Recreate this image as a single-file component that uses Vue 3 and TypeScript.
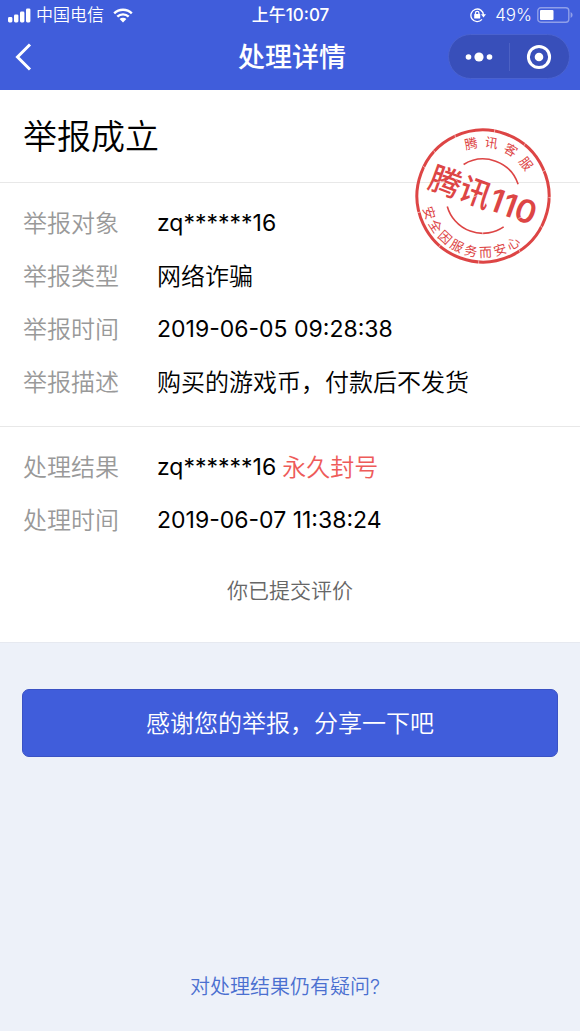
<script setup lang="ts">
interface Row {
  label: string
  value: string
  latin?: boolean
  note?: string
}

interface Glyph {
  char: string
  angle: number
}

const reportRows: Row[] = [
  { label: '举报对象', value: 'zq******16', latin: true },
  { label: '举报类型', value: '网络诈骗' },
  { label: '举报时间', value: '2019-06-05 09:28:38', latin: true },
  { label: '举报描述', value: '购买的游戏币，付款后不发货' },
]

const resultRows: Row[] = [
  { label: '处理结果', value: 'zq******16', latin: true, note: '永久封号' },
  { label: '处理时间', value: '2019-06-07 11:38:24', latin: true },
]

// Spreads characters evenly round a circle, centred on angle 0.
function spread(text: string, step: number): Glyph[] {
  const chars = Array.from(text)
  return chars.map((char, i) => ({ char, angle: (i - (chars.length - 1) / 2) * step }))
}

const topGlyphs = spread('腾讯客服', 22)
const bottomGlyphs = spread('安全因服务而安心', -15)
</script>

<template>
  <div class="page">
    <header class="top">
      <div class="status">
        <div class="status-side">
          <svg class="signal" viewBox="0 0 23 15" aria-hidden="true">
            <rect x="0" y="9" width="4.4" height="5.4" rx="1.4" />
            <rect x="6" y="6.4" width="4.4" height="8" rx="1.4" />
            <rect x="12" y="3.6" width="4.4" height="10.8" rx="1.4" />
            <rect x="18" y=".4" width="4.4" height="14" rx="1.4" />
          </svg>
          <span>中国电信</span>
          <svg class="wifi" viewBox="0 0 20 15" aria-hidden="true">
            <path d="M1.2 5.4a12.4 12.4 0 0 1 17.6 0" />
            <path d="M4.3 8.7a8.1 8.1 0 0 1 11.4 0" />
            <path class="wifi-dot" d="M6.6 11.1a4.8 4.8 0 0 1 6.8 0L10 14.5z" />
          </svg>
        </div>
        <span class="clock">上午10:07</span>
        <div class="status-side status-right">
          <svg class="lock" viewBox="0 0 16 16" aria-hidden="true">
            <path d="M12 12.4A6.3 6.3 0 1 1 13.5 8" />
            <path class="solid" d="M11 7.2h5l-2.5 3.2z" />
            <rect class="solid" x="4.2" y="7" width="6" height="4.6" rx=".6" />
            <path d="M5.5 7.2V6a1.7 1.7 0 0 1 3.4 0v1.2" />
          </svg>
          <span>49%</span>
          <svg class="battery" viewBox="0 0 36 16" aria-hidden="true">
            <rect class="case" x=".8" y=".8" width="31" height="14.4" rx="3" />
            <rect x="3" y="3" width="13.5" height="10" rx="1" />
            <path class="tip" d="M33.6 5v6q2-1 2-3t-2-3z" />
          </svg>
        </div>
      </div>
      <nav class="bar">
        <button class="back" type="button" aria-label="返回">
          <svg viewBox="0 0 18 28" aria-hidden="true"><path d="M16 1.5 3.5 14 16 26.5" /></svg>
        </button>
        <h1>处理详情</h1>
        <div class="capsule">
          <button type="button" aria-label="更多">
            <svg viewBox="0 0 28 10" aria-hidden="true">
              <circle cx="3.5" cy="5" r="2.8" />
              <circle cx="14" cy="5" r="4.6" />
              <circle cx="24.5" cy="5" r="2.8" />
            </svg>
          </button>
          <button type="button" aria-label="关闭">
            <svg class="target" viewBox="0 0 26 26" aria-hidden="true">
              <circle class="ring" cx="13" cy="13" r="10.6" />
              <circle cx="13" cy="13" r="4.3" />
            </svg>
          </button>
        </div>
      </nav>
    </header>

    <main class="panel">
      <h2>举报成立</h2>
      <dl>
        <div v-for="row in reportRows" :key="row.label" class="row">
          <dt>{{ row.label }}</dt>
          <dd><span :class="{ latin: row.latin }">{{ row.value }}</span></dd>
        </div>
      </dl>
      <dl>
        <div v-for="row in resultRows" :key="row.label" class="row">
          <dt>{{ row.label }}</dt>
          <dd>
            <span :class="{ latin: row.latin }">{{ row.value }}</span>
            <span v-if="row.note" class="note">{{ row.note }}</span>
          </dd>
        </div>
      </dl>
      <p class="rated">你已提交评价</p>

      <svg class="stamp" viewBox="-70 -70 140 140" role="img" aria-label="腾讯110">
        <g transform="rotate(20)">
          <circle class="edge" r="66" />
          <path class="arc" d="M-29 -23A37 37 0 0 1 29 -23" />
          <path class="arc" d="M-30 22A37 37 0 0 0 30 22" />
          <text
            v-for="(g, i) in topGlyphs"
            :key="`t${i}`"
            class="small"
            :transform="`rotate(${g.angle})`"
            y="-49"
          >{{ g.char }}</text>
          <text
            v-for="(g, i) in bottomGlyphs"
            :key="`b${i}`"
            class="small"
            :transform="`rotate(${g.angle})`"
            y="61"
          >{{ g.char }}</text>
          <text class="brand" y="11">腾讯<tspan class="digits">110</tspan></text>
          <g class="wear">
            <path d="M-67 -8l4 2M-62 -26l4 3M-48 -49l3 5M-12 -69l1 6M22 -65l-1 5M50 -46l-4 5M62 -21l5-1M64 8l5 3M52 38l5 5M18 62l2 6M-23 60l-2 6M-53 36l-5 4" />
            <path d="M-50 4l9-5M-36 -9l7 4M-13 8l8-7M5 -6l6 3M20 5l7-3M41 9l8-8M-16 -35l2-4M12 34l2 5" />
          </g>
        </g>
      </svg>
    </main>

    <div class="actions">
      <button class="share" type="button">感谢您的举报，分享一下吧</button>
    </div>
    <footer><a href="#">对处理结果仍有疑问?</a></footer>
  </div>
</template>

<style>
body {
  margin: 0;
  background: #edf1f9;
}
</style>

<style scoped>
.page {
  display: flex;
  flex-direction: column;
  min-height: 100vh;
  background: #edf1f9;
  color: #000;
  font-family: Inter, "Noto Sans CJK SC", sans-serif;
}

button {
  display: flex;
  align-items: center;
  justify-content: center;
  margin: 0;
  padding: 0;
  border: 0;
  background: none;
  color: inherit;
  font: inherit;
}

.top {
  background: #405ddb;
  color: #fff;
}

.status {
  display: grid;
  grid-template-columns: 1fr auto 1fr;
  align-items: center;
  height: 30px;
  padding: 0 7px 0 8px;
  font-size: 17px;
  font-weight: 350;
  line-height: 30px;
}

.status-side {
  display: flex;
  align-items: center;
  gap: 5px;
  fill: #fff;
}

.status-right {
  justify-content: flex-end;
}

.signal {
  width: 23px;
  height: 15px;
}

.wifi {
  width: 20px;
  height: 15px;
  margin-left: 4px;
  fill: none;
  stroke: #fff;
  stroke-width: 2.4;
}

.wifi-dot {
  fill: #fff;
  stroke: none;
}

.clock {
  font-weight: 500;
}

.lock {
  width: 16px;
  height: 16px;
  margin-right: 4px;
  fill: none;
  stroke: #fff;
  stroke-width: 1.3;
}

.solid {
  fill: #fff;
  stroke: none;
}

.battery {
  width: 36px;
  height: 16px;
}

.case {
  fill: none;
  stroke: #8f9fe9;
  stroke-width: 1.4;
}

.tip {
  fill: #8f9fe9;
}

.bar {
  display: grid;
  grid-template-columns: 1fr auto 1fr;
  align-items: center;
  height: 60px;
  padding: 0 10px 7px 14px;
  box-sizing: border-box;
}

.back {
  justify-self: start;
}

.back svg {
  width: 18px;
  height: 28px;
  fill: none;
  stroke: #fff;
  stroke-width: 3;
}

h1 {
  margin: 0;
  padding-top: 2px;
  font-size: 27px;
  font-weight: 500;
  line-height: 36px;
}

.capsule {
  display: flex;
  justify-self: end;
  width: 122px;
  height: 45px;
  box-sizing: border-box;
  border: 1px solid #4a62cf;
  border-radius: 23px;
  background: #384fba;
  align-items: center;
}

.capsule button {
  flex: 1;
  height: 28px;
}

.capsule button + button {
  border-left: 1px solid #4c61c4;
}

.capsule svg {
  width: 28px;
  height: 10px;
  fill: #fff;
}

.capsule .target {
  width: 26px;
  height: 26px;
}

.capsule .ring {
  fill: none;
  stroke: #fff;
  stroke-width: 3;
}

.panel {
  position: relative;
  background: #fff;
  border-bottom: 1px solid #e6e9f0;
}

h2 {
  margin: 0;
  padding: 22px 23px 20px;
  font-size: 34px;
  font-weight: 350;
  line-height: 50px;
}

dl {
  margin: 0;
  padding: 14px 23px 17px;
  border-top: 1px solid #e8e8e8;
}

.row {
  display: flex;
  font-size: 24px;
  font-weight: 350;
  line-height: 53px;
}

dt {
  flex: 0 0 134px;
  color: #999;
}

dd {
  display: flex;
  gap: 6px;
  margin: 0;
}

.latin {
  font-size: 23px;
  font-weight: 400;
}

.note {
  color: #ee5b59;
}

.rated {
  margin: 0;
  padding: 12px 0 36px;
  color: #666;
  font-size: 21px;
  font-weight: 350;
  line-height: 30px;
  text-align: center;
}

.stamp {
  position: absolute;
  top: 36px;
  right: 27px;
  width: 140px;
  height: 140px;
  fill: #dd4545;
}

.edge {
  fill: none;
  stroke: #dd4545;
  stroke-width: 3;
}

.arc {
  fill: none;
  stroke: #dd4545;
  stroke-width: 1.6;
}

.stamp text {
  font-family: "Noto Sans CJK SC", sans-serif;
  text-anchor: middle;
}

.small {
  font-size: 13px;
  font-weight: 400;
}

.brand {
  font-size: 32px;
  font-weight: 500;
}

.digits {
  font-family: Inter, sans-serif;
  font-weight: 600;
}

.wear {
  fill: none;
  stroke: #fff;
  stroke-width: 0.7;
  opacity: 0.7;
}

.actions {
  padding: 46px 22px 0;
}

.share {
  width: 100%;
  height: 68px;
  padding-bottom: 3px;
  border: 1px solid #3a52c4;
  border-radius: 7px;
  background: #405ddb;
  color: #fff;
  font-size: 24px;
  font-weight: 350;
}

footer {
  margin-top: auto;
  padding: 24px 10px 29px 0;
  font-size: 20px;
  font-weight: 350;
  line-height: 30px;
  text-align: center;
}

footer a {
  color: #4a6fd0;
  text-decoration: none;
}
</style>
